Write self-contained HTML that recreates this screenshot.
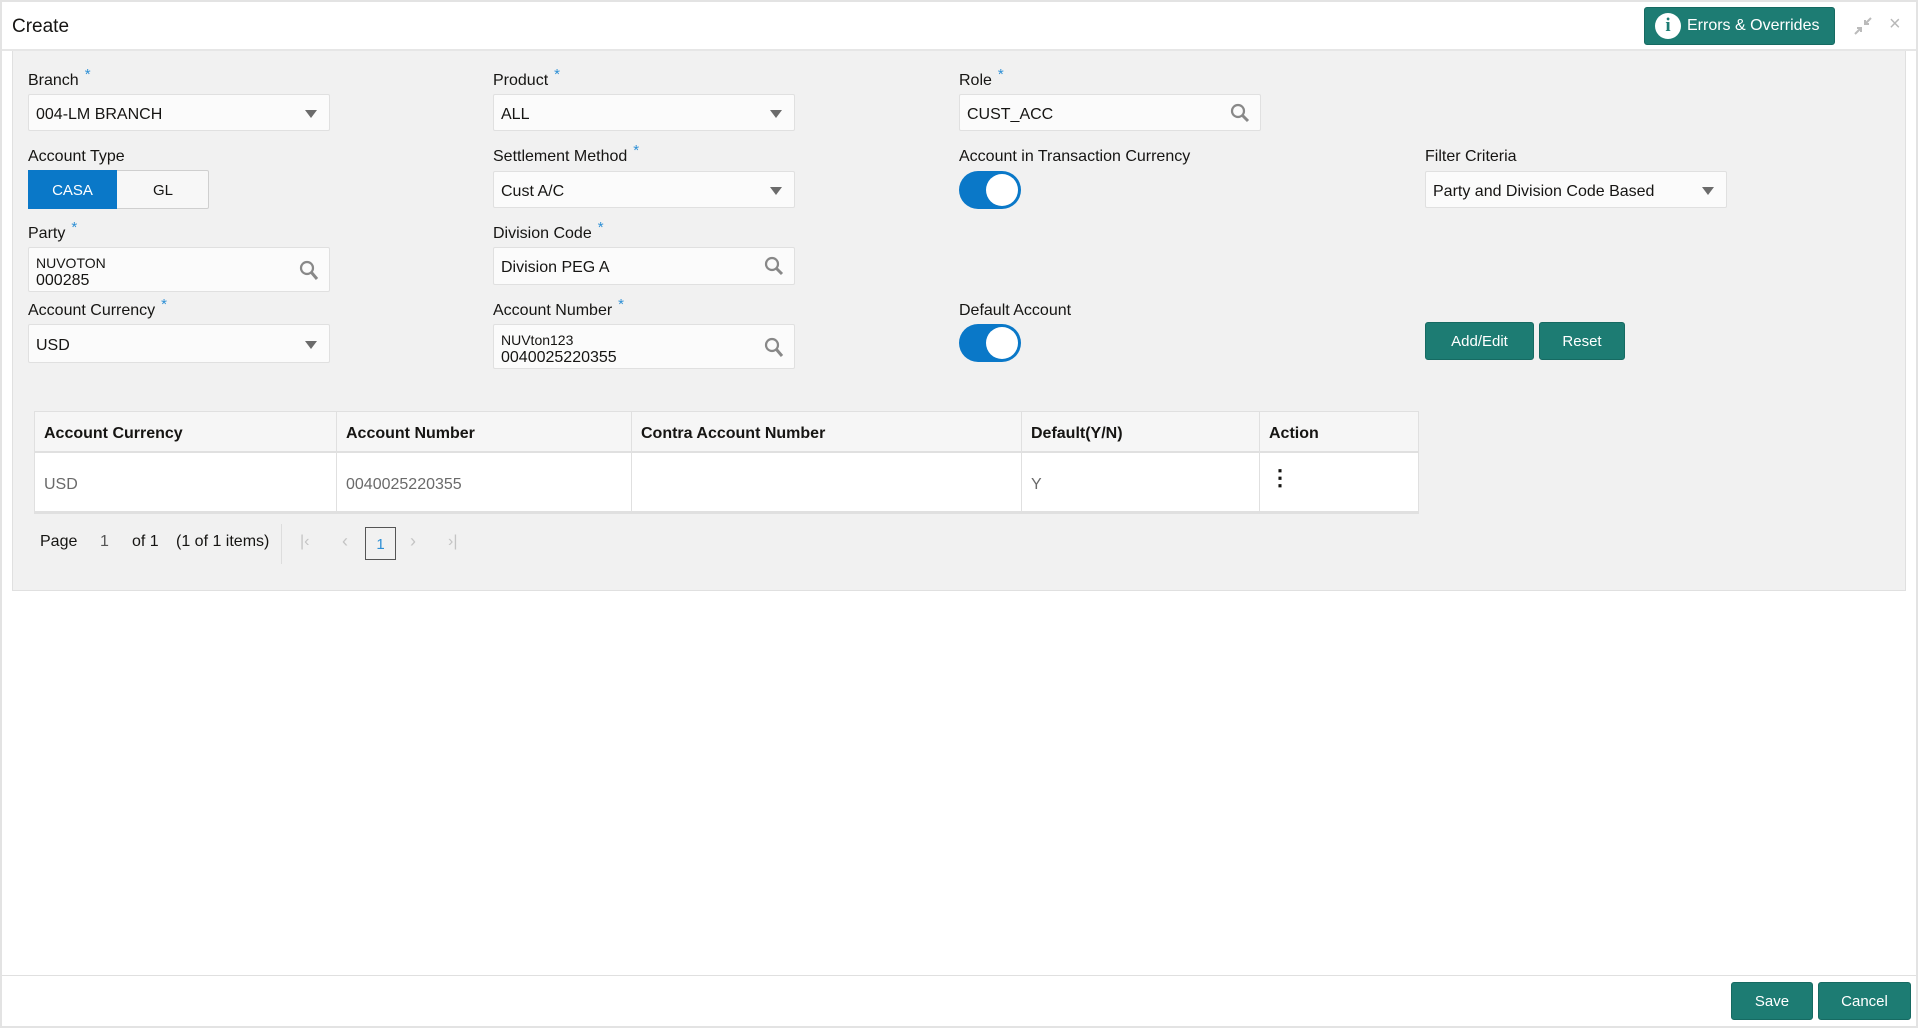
<!DOCTYPE html>
<html><head><meta charset="utf-8"><style>
*{box-sizing:border-box}
body{margin:0;width:1918px;height:1028px;background:#fff;font-family:"Liberation Sans",sans-serif;color:#161513;position:relative;overflow:hidden}
.abs{position:absolute}
.lbl{position:absolute;font-size:16px;color:#161513;margin-top:2px}
.lbl .s{color:#2d8fd5;font-size:15px;position:relative;top:-6px;margin-left:6px}
.inp{position:absolute;background:#fbfbfb;border:1px solid #e0e0e0;border-radius:2px;font-size:16px;color:#161513;padding-left:7px;padding-top:4px;display:flex;align-items:center}
.arrow{position:absolute;right:12px;top:50%;margin-top:-3px;width:0;height:0;border-left:6px solid transparent;border-right:6px solid transparent;border-top:8px solid #6b6b6b}
.btn{position:absolute;background:#1d7c73;color:#fff;border-radius:3px;font-size:15px;display:flex;align-items:center;justify-content:center;border:1px solid #166a62}
.tog{position:absolute;width:62px;height:38px;border-radius:19px;background:#0a78c8}
.tog::after{content:"";position:absolute;right:3px;top:3px;width:32px;height:32px;border-radius:50%;background:#fff}
.th{position:absolute;top:0;height:41px;line-height:43px;font-weight:bold;font-size:16px;padding-left:9px;border-right:1px solid #e0e0e0}
.td{position:absolute;top:41px;height:61px;line-height:63px;font-size:16px;color:#6a6a6a;padding-left:9px;border-right:1px solid #e0e0e0}
</style></head><body>
<div class="abs" style="left:0;top:0;width:1918px;height:1028px;border:2px solid #e3e3e3;z-index:5;pointer-events:none"></div>
<div class="abs" style="left:0;top:0;width:1918px;height:51px;border-bottom:2px solid #e6e6e6;background:#fff"></div>
<div class="abs" style="left:12px;top:16px;font-size:19px">Create</div>
<div class="btn" style="left:1644px;top:7px;width:191px;height:38px;font-size:16px;justify-content:flex-start;padding-left:10px">
<span style="display:inline-block;width:26px;height:26px;border-radius:50%;background:#fff;color:#1d7c73;font-weight:bold;text-align:center;line-height:26px;font-size:19px;margin-right:6px;font-family:'Liberation Serif',serif">i</span>Errors &amp; Overrides</div>
<svg class="abs" style="left:1853px;top:16px" width="20" height="20" viewBox="0 0 20 20"><path d="M2 18L8 12M4 12H8V16M18 2L12 8M12 4V8H16" stroke="#bbb" stroke-width="2" fill="none"/></svg>
<div class="abs" style="left:1889px;top:13px;color:#b8b8b8;font-size:20px">×</div>

<div class="abs" style="left:12px;top:51px;width:1894px;height:540px;background:#f1f1f1;border:1px solid #e0e0e0;border-top:none"></div>

<div class="lbl" style="left:28px;top:70px">Branch<span class="s">*</span></div>
<div class="inp" style="left:28px;top:94px;width:302px;height:37px">004-LM BRANCH<div class="arrow"></div></div>
<div class="lbl" style="left:493px;top:70px">Product<span class="s">*</span></div>
<div class="inp" style="left:493px;top:94px;width:302px;height:37px">ALL<div class="arrow"></div></div>
<div class="lbl" style="left:959px;top:70px">Role<span class="s">*</span></div>
<div class="inp" style="left:959px;top:94px;width:302px;height:37px">CUST_ACC
<svg class="abs" style="right:10px;top:8px" width="20" height="20" viewBox="0 0 20 20"><circle cx="8" cy="8" r="6" fill="none" stroke="#888" stroke-width="2.2"/><path d="M12.5 12.5L18 18" stroke="#888" stroke-width="3"/></svg></div>

<div class="lbl" style="left:28px;top:146px">Account Type</div>
<div class="abs" style="left:28px;top:170px;width:181px;height:39px;border:1px solid #cfcfcf;border-radius:2px;background:#f7f7f7"></div>
<div class="abs" style="left:28px;top:170px;width:89px;height:39px;background:#0a78c8;color:#fff;font-size:15px;text-align:center;line-height:41px">CASA</div>
<div class="abs" style="left:117px;top:170px;width:92px;height:39px;font-size:15px;text-align:center;line-height:41px">GL</div>
<div class="lbl" style="left:493px;top:146px">Settlement Method<span class="s">*</span></div>
<div class="inp" style="left:493px;top:171px;width:302px;height:37px">Cust A/C<div class="arrow"></div></div>
<div class="lbl" style="left:959px;top:146px">Account in Transaction Currency</div>
<div class="tog" style="left:959px;top:171px"></div>
<div class="lbl" style="left:1425px;top:146px">Filter Criteria</div>
<div class="inp" style="left:1425px;top:171px;width:302px;height:37px">Party and Division Code Based<div class="arrow"></div></div>

<div class="lbl" style="left:28px;top:223px">Party<span class="s">*</span></div>
<div class="inp" style="left:28px;top:247px;width:302px;height:45px;display:block;padding-top:6px;line-height:18px"><div style="font-size:14px">NUVOTON</div><div>000285</div>
<svg class="abs" style="right:10px;top:12px" width="20" height="22" viewBox="0 0 20 22"><circle cx="8" cy="8" r="6" fill="none" stroke="#888" stroke-width="2.2"/><path d="M12.5 12.5L18 19" stroke="#888" stroke-width="3"/></svg></div>
<div class="lbl" style="left:493px;top:223px">Division Code<span class="s">*</span></div>
<div class="inp" style="left:493px;top:247px;width:302px;height:38px">Division PEG A
<svg class="abs" style="right:10px;top:8px" width="20" height="20" viewBox="0 0 20 20"><circle cx="8" cy="8" r="6" fill="none" stroke="#888" stroke-width="2.2"/><path d="M12.5 12.5L18 18" stroke="#888" stroke-width="3"/></svg></div>

<div class="lbl" style="left:28px;top:300px">Account Currency<span class="s">*</span></div>
<div class="inp" style="left:28px;top:324px;width:302px;height:39px">USD<div class="arrow"></div></div>
<div class="lbl" style="left:493px;top:300px">Account Number<span class="s">*</span></div>
<div class="inp" style="left:493px;top:324px;width:302px;height:45px;display:block;padding-top:6px;line-height:18px"><div style="font-size:14px">NUVton123</div><div>0040025220355</div>
<svg class="abs" style="right:10px;top:12px" width="20" height="22" viewBox="0 0 20 22"><circle cx="8" cy="8" r="6" fill="none" stroke="#888" stroke-width="2.2"/><path d="M12.5 12.5L18 19" stroke="#888" stroke-width="3"/></svg></div>
<div class="lbl" style="left:959px;top:300px">Default Account</div>
<div class="tog" style="left:959px;top:324px"></div>
<div class="btn" style="left:1425px;top:322px;width:109px;height:38px">Add/Edit</div>
<div class="btn" style="left:1539px;top:322px;width:86px;height:38px">Reset</div>

<div class="abs" style="left:34px;top:411px;width:1385px;height:103px;background:#fff;border:1px solid #e0e0e0;border-bottom:3px solid #e0e0e0">
<div class="abs" style="left:0;top:0;width:1383px;height:41px;background:#f6f6f6;border-bottom:2px solid #e0e0e0"></div>
<div class="th" style="left:0;width:302px">Account Currency</div>
<div class="th" style="left:302px;width:295px">Account Number</div>
<div class="th" style="left:597px;width:390px">Contra Account Number</div>
<div class="th" style="left:987px;width:238px">Default(Y/N)</div>
<div class="th" style="left:1225px;width:158px;border:none">Action</div>
<div class="td" style="left:0;width:302px">USD</div>
<div class="td" style="left:302px;width:295px">0040025220355</div>
<div class="td" style="left:597px;width:390px"></div>
<div class="td" style="left:987px;width:238px">Y</div>
<div class="td" style="left:1225px;width:158px;border:none;color:#161513;font-weight:bold;font-size:22px;line-height:50px">⋮</div>
</div>

<div class="abs" style="left:40px;top:533px;font-size:16px">Page</div>
<div class="abs" style="left:100px;top:533px;font-size:16px;color:#555">1</div>
<div class="abs" style="left:132px;top:533px;font-size:16px">of 1</div>
<div class="abs" style="left:176px;top:533px;font-size:16px">(1 of 1 items)</div>
<div class="abs" style="left:281px;top:524px;width:1px;height:40px;background:#ddd"></div>
<div class="abs" style="left:300px;top:533px;font-size:16px;color:#c4c4c4">|&lsaquo;</div>
<div class="abs" style="left:342px;top:531px;font-size:18px;color:#c4c4c4">&lsaquo;</div>
<div class="abs" style="left:365px;top:527px;width:31px;height:33px;border:1px solid #555;text-align:center;line-height:33px;font-size:15px;color:#2d8fd5">1</div>
<div class="abs" style="left:410px;top:531px;font-size:18px;color:#c4c4c4">&rsaquo;</div>
<div class="abs" style="left:448px;top:533px;font-size:16px;color:#c4c4c4">&rsaquo;|</div>

<div class="abs" style="left:0;top:975px;width:1918px;height:1px;background:#e0e0e0"></div>
<div class="btn" style="left:1731px;top:982px;width:82px;height:38px">Save</div>
<div class="btn" style="left:1818px;top:982px;width:93px;height:38px">Cancel</div>
</body></html>
